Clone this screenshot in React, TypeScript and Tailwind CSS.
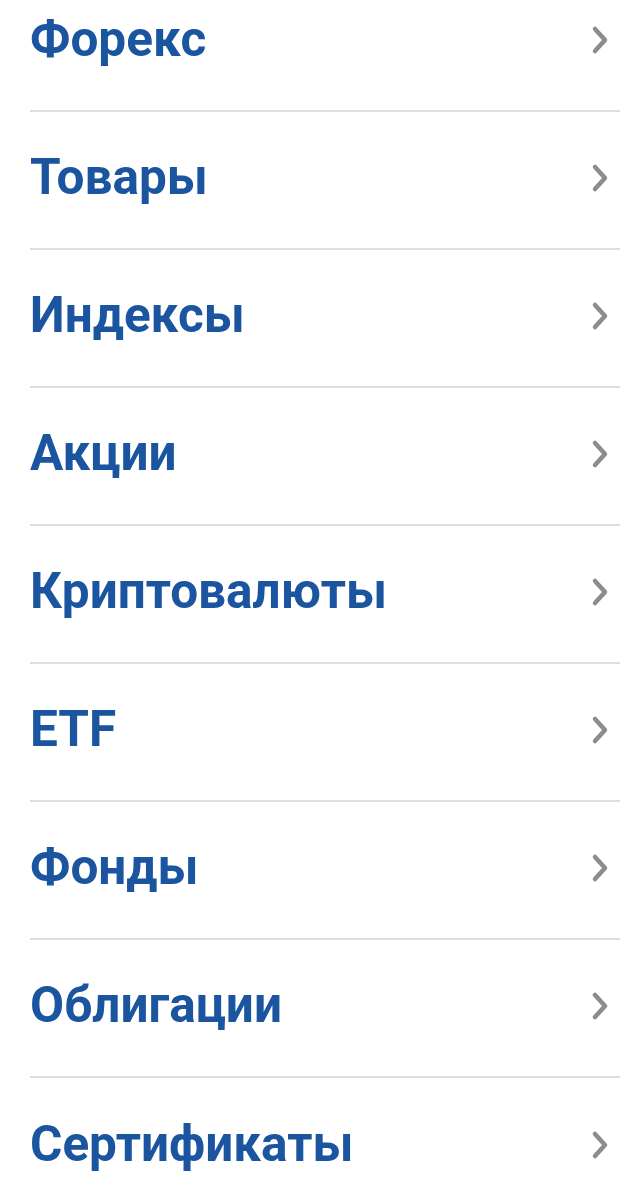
const items = [
  "Форекс",
  "Товары",
  "Индексы",
  "Акции",
  "Криптовалюты",
  "ETF",
  "Фонды",
  "Облигации",
  "Сертификаты",
];

function Chevron() {
  return (
    <svg
      width="20"
      height="34"
      viewBox="0 0 20 34"
      fill="none"
      className="mr-[10px] shrink-0"
    >
      <polyline
        points="5,6 15,17 5,28"
        stroke="#8c8c8c"
        strokeWidth="4.5"
        strokeLinecap="round"
        strokeLinejoin="round"
      />
    </svg>
  );
}

export default function App() {
  return (
    <div className="min-h-[1200px] overflow-hidden bg-white font-['Roboto',sans-serif]">
      <ul className="-mt-[26px] ml-[30px] mr-[16px]">
        {items.map((label) => (
          <li
            key={label}
            className="flex h-[138px] items-center justify-between border-b-2 border-[#dedede] pb-[4px] last:border-b-0"
          >
            <span className="text-[49.5px] font-bold leading-none text-[#1b55a0]">
              {label}
            </span>
            <Chevron />
          </li>
        ))}
      </ul>
    </div>
  );
}
